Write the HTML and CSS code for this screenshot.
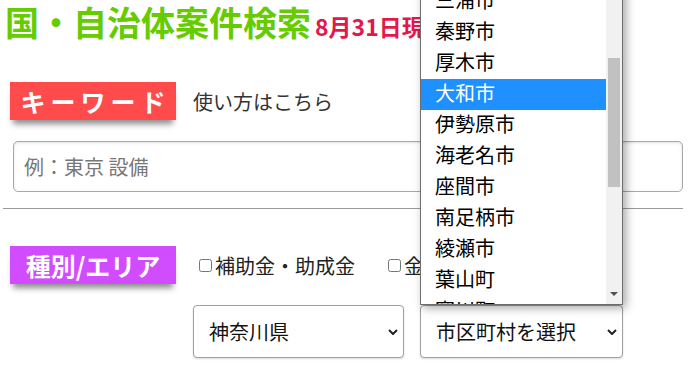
FILE: index.html
```html
<!DOCTYPE html>
<html lang="ja">
<head>
  <meta charset="UTF-8" />
  <meta name="viewport" content="width=device-width, initial-scale=1.0"/>
  <title>国・自治体案件検索</title>
  <link rel="stylesheet" href="styles.css">
</head>
<body>
  <div class="page">
    <h1 class="title">国・自治体案件検索<span class="date">8月31日現在</span></h1>

    <section class="block">
      <div class="block-head">
        <span class="tag tag-red tag-wide">キーワード</span>
        <a class="howto" href="#">使い方はこちら</a>
      </div>
      <input class="keyword" type="text" placeholder="例：東京 設備" />
    </section>

    <hr class="divider">

    <section class="block">
      <div class="block-head block-head-area">
        <span class="tag tag-purple">種別/エリア</span>
        <label class="check"><input type="checkbox">補助金・助成金</label>
        <label class="check"><input type="checkbox">金融・融資</label>
      </div>

      <div class="area">
        <div class="select pref">
          <span>神奈川県</span>
          <svg class="chev" width="10" height="6" viewBox="0 0 10 6"><path d="M1 1l4 4 4-4" fill="none" stroke="#222" stroke-width="2"/></svg>
        </div>
        <div class="city-wrap">
          <div class="select city">
            <span>市区町村を選択</span>
            <svg class="chev" width="10" height="6" viewBox="0 0 10 6"><path d="M1 1l4 4 4-4" fill="none" stroke="#222" stroke-width="2"/></svg>
          </div>

          <!-- open dropdown list -->
          <div class="listbox">
            <ul class="options">
              <li>三浦市</li>
              <li>秦野市</li>
              <li>厚木市</li>
              <li class="selected">大和市</li>
              <li>伊勢原市</li>
              <li>海老名市</li>
              <li>座間市</li>
              <li>南足柄市</li>
              <li>綾瀬市</li>
              <li>葉山町</li>
              <li>寒川町</li>
            </ul>
            <div class="scrollbar">
              <div class="thumb"></div>
              <div class="arrow-down"></div>
            </div>
          </div>
        </div>
      </div>
    </section>
  </div>
</body>
</html>
```

FILE: styles.css
```css
* {
  margin: 0;
  padding: 0;
  box-sizing: border-box;
}

body {
  font-family: "Noto Sans CJK JP", "Noto Sans", sans-serif;
  background: #fff;
  color: #222;
  overflow: hidden;
}

.page {
  width: 695px;
  height: 371px;
}

.title {
  height: 44px;
  line-height: 44px;
  padding-left: 5px;
  font-size: 34px;
  font-weight: 700;
  color: #66cc00;
  white-space: nowrap;
}

.date {
  margin-left: 4px;
  font-size: 23px;
  color: #e3174b;
}

.block-head {
  display: flex;
  align-items: center;
  margin-top: 38px;
  padding-left: 10px;
}

.block-head-area {
  margin-top: 37px;
}

.tag {
  width: 166px;
  height: 38px;
  line-height: 38px;
  text-align: center;
  color: #fff;
  font-size: 25px;
  font-weight: 700;
  box-shadow: 0 7px 6px -3px rgba(0, 0, 0, 0.45);
}

.tag-wide {
  letter-spacing: 5px;
  text-indent: 5px;
}

.tag-red {
  background: #ff4b4b;
}

.tag-purple {
  background: #d24cff;
}

.howto {
  margin-left: 17px;
  font-size: 20px;
  color: #333;
  text-decoration: none;
}

.keyword {
  display: block;
  margin: 21px 0 0 13px;
  width: 670px;
  height: 51px;
  padding-left: 10px;
  font-family: inherit;
  font-size: 20px;
  border: 1px solid #a8a8a8;
  border-radius: 5px;
  box-shadow: inset 0 1px 3px rgba(0, 0, 0, 0.12);
  outline: none;
}

.keyword::placeholder {
  color: #777;
}

.divider {
  margin: 16px 0 0 3px;
  width: 680px;
  border: none;
  border-top: 1px solid #9a9a9a;
}

.block-head .tag-purple + .check {
  margin-left: 23px;
}

.check {
  display: flex;
  align-items: center;
  font-size: 20px;
  color: #222;
  margin-left: 33px;
  white-space: nowrap;
}

.check input {
  width: 13px;
  height: 13px;
  margin: 1px 3px 0 0;
}

.area {
  display: flex;
  gap: 16px;
  margin-top: 21px;
  padding-left: 193px;
}

.select {
  display: flex;
  align-items: center;
  justify-content: space-between;
  height: 53px;
  padding: 0 5px 0 15px;
  font-size: 20px;
  color: #111;
  background: #fff;
  border: 1px solid #a0a0a0;
  border-radius: 4px;
  box-shadow: 0 1px 2px rgba(0, 0, 0, 0.15);
}

.pref {
  width: 211px;
}

.city {
  width: 203px;
}

.city-wrap {
  position: relative;
}

.listbox {
  position: absolute;
  left: 0;
  bottom: 100%;
  width: 203px;
  height: 320px;
  display: flex;
  background: #fff;
  border: 1px solid #6e6e6e;
  box-shadow: 3px 3px 9px rgba(0, 0, 0, 0.35);
  overflow: hidden;
}

.options {
  flex: 1;
  list-style: none;
}

.options li {
  height: 31px;
  line-height: 27px;
  padding-left: 14px;
  font-size: 20px;
  color: #000;
}

.options li.selected {
  background: #1e90ff;
  color: #fff;
}

.scrollbar {
  position: relative;
  width: 16px;
  background: #f1f1f1;
}

.thumb {
  margin: 72px 0 0 2px;
  width: 12px;
  height: 129px;
  background: #c1c1c1;
}

.arrow-down {
  position: absolute;
  left: 4px;
  bottom: 8px;
  width: 0;
  height: 0;
  border-left: 4px solid transparent;
  border-right: 4px solid transparent;
  border-top: 4px solid #505050;
}
```
